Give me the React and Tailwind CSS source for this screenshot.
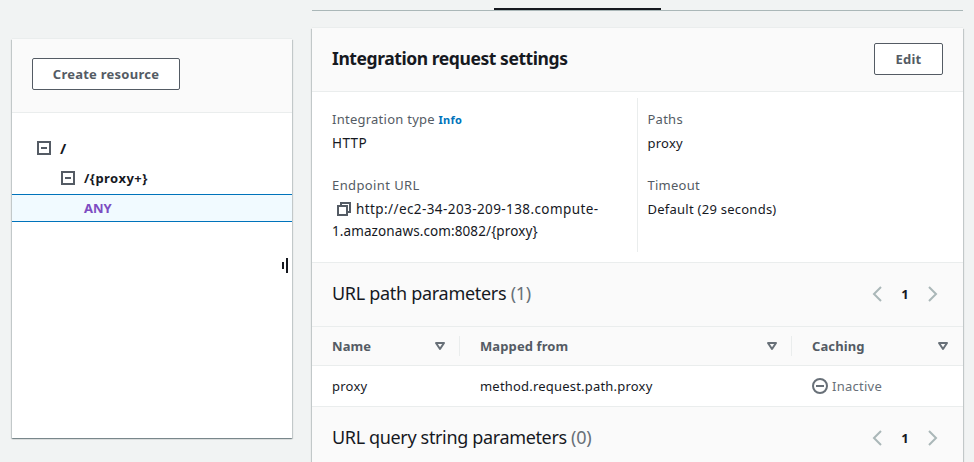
const panelShadow =
  "shadow-[0_-1px_0_0_#eaeded,0_1px_1px_0_rgba(0,28,36,0.3),1px_1px_1px_0_rgba(0,28,36,0.15),-1px_1px_1px_0_rgba(0,28,36,0.15)]";

function Chevron({ flip }) {
  return (
    <svg width="16" height="16" viewBox="0 0 16 16" fill="none" stroke="#aab7b8" strokeWidth="2" className={flip ? "-scale-x-100" : ""}>
      <path d="M12 1 5 8l7 7" />
    </svg>
  );
}

function Sort() {
  return (
    <svg width="16" height="16" viewBox="0 0 16 16" fill="none" stroke="#687078" strokeWidth="2" strokeLinejoin="round">
      <path d="M4 5h8l-4 6z" />
    </svg>
  );
}

function Collapse() {
  return (
    <svg width="14" height="14" viewBox="0 0 14 14" fill="none" stroke="#545b64" strokeWidth="2">
      <path d="M1 1h12v12H1zM4 7h6" />
    </svg>
  );
}

function SectionHeader({ title, count, spacing }) {
  return (
    <div className="flex h-16 shrink-0 items-center justify-between border-b border-[#eaeded] bg-[#fafafa] pr-[22px] pl-5">
      <h3 className={"-mt-1 text-[18px] leading-[22px] " + spacing}>
        {title} <span className="text-[#687078]">({count})</span>
      </h3>
      <div className="-mt-px flex items-center text-[13px] font-bold">
        <Chevron />
        <span className="w-10 text-center">1</span>
        <Chevron flip />
      </div>
    </div>
  );
}

function Field({ label, children }) {
  return (
    <div className="flex flex-col gap-0.5">
      <div className="text-[#545b64]">{label}</div>
      <div>{children}</div>
    </div>
  );
}

export default function App() {
  return (
    <div className="flex h-[462px] w-[974px] gap-5 overflow-hidden bg-[#f1f3f3] pl-3 font-['Noto_Sans',sans-serif] text-[13px] leading-[22px] tracking-[0.25px] text-[#16191f]">
      <aside className={"mt-[39px] flex h-[399px] w-[280px] flex-col bg-white " + panelShadow}>
        <div className="flex h-[74px] items-start border-b border-[#eaeded] bg-[#fafafa] px-5 pt-[19px]">
          <button className="h-8 w-[148px] rounded-[2px] border border-[#545b64] bg-white text-[13px] font-bold tracking-[0.25px] text-[#545b64]">
            Create resource
          </button>
        </div>
        <div className="flex flex-col pt-5 font-bold">
          <div className="flex h-[30px] items-center gap-[9px] pl-[25px]"><Collapse /><span className="text-[15px]">/</span></div>
          <div className="flex h-[30px] items-center gap-[9px] pl-[49px]"><Collapse /><span className="tracking-[0.45px]">/{"{proxy+}"}</span></div>
          <div className="mt-px flex h-7 items-center border-y border-[#0073bb] bg-[#f1faff] pl-[72px] tracking-normal text-[#7d4cc2]">ANY</div>
        </div>
        <div className="mt-9 flex items-center justify-end gap-0.5 pr-1">
          <span className="h-[7px] w-0.5 bg-[#16191f]" />
          <span className="h-[15px] w-0.5 bg-[#16191f]" />
        </div>
      </aside>

      <main className="flex w-[651px] flex-col">
        <div className="flex h-[11px] shrink-0 items-end border-b border-[#aab7b8]">
          <span className="ml-[182px] h-0.5 w-[167px] bg-[#16191f]" />
        </div>
        <section className={"mt-[17px] flex h-[460px] shrink-0 flex-col bg-white " + panelShadow}>
          <div className="flex h-16 shrink-0 items-center justify-between border-b border-[#eaeded] bg-[#fafafa] px-5">
            <h2 className="-mt-1 text-[17.5px] font-bold leading-[22px] tracking-[-0.43px]">Integration request settings</h2>
            <button className="-mt-px h-8 w-[69px] rounded-[2px] border border-[#545b64] bg-white text-[13px] font-bold tracking-[0.25px] text-[#545b64]">Edit</button>
          </div>
          <div className="flex h-[171px] shrink-0 border-b border-[#eaeded] pt-1.5">
            <div className="flex w-[325px] flex-col gap-5 pt-2.5 pl-5">
              <Field label={<>Integration type <b className="text-[11px] leading-none text-[#0073bb]">Info</b></>}>
                <span className="text-[13.5px] leading-none tracking-[0.4px]">HTTP</span>
              </Field>
              <Field label={<span className="tracking-[0.4px]">Endpoint URL</span>}>
                <svg width="16" height="16" viewBox="0 0 16 16" fill="none" stroke="#545b64" strokeWidth="2" className="mr-1 ml-1 inline-block align-[-3px]">
                  <path d="M2 5h9v9H2zM5 5V2h9v9h-3" />
                </svg>
                <span className="text-[13.5px] leading-none tracking-[0.41px]">http://ec2-34-203-209-138.compute-</span>
                <br />
                <span className="text-[13.5px] leading-none tracking-[0.1px]">1.amazonaws.com:8082/{"{proxy}"}</span>
              </Field>
            </div>
            <div className="flex h-[154px] flex-col gap-5 border-l border-[#eaeded] pt-2.5 pl-[9.5px]">
              <Field label="Paths">proxy</Field>
              <Field label="Timeout">Default (29 seconds)</Field>
            </div>
          </div>
          <SectionHeader title="URL path parameters" count={1} spacing="tracking-[-0.3px]" />
          <div className="flex h-[39px] shrink-0 items-center border-b border-[#eaeded] bg-[#fafafa] font-bold tracking-[0.1px] text-[#545b64]">
            <div className="flex h-5 w-[148px] items-center justify-between border-r border-[#eaeded] pr-[11px] pl-5">Name<Sort /></div>
            <div className="flex h-5 w-[332px] items-center justify-between border-r border-[#eaeded] pr-[11px] pl-5">Mapped from<Sort /></div>
            <div className="flex h-5 w-[171px] items-center justify-between pr-3 pl-5">Caching<Sort /></div>
          </div>
          <div className="flex h-[41px] shrink-0 items-center border-b border-[#eaeded]">
            <div className="w-[148px] pl-5">proxy</div>
            <div className="w-[332px] pl-5 tracking-[0.2px]">method.request.path.proxy</div>
            <div className="flex items-center gap-1 pl-5 text-[#687078]">
              <svg width="16" height="16" viewBox="0 0 16 16" fill="none" stroke="#687078" strokeWidth="2">
                <circle cx="8" cy="8" r="7" />
                <path d="M4 8h8" />
              </svg>
              Inactive
            </div>
          </div>
          <SectionHeader title="URL query string parameters" count={0} spacing="tracking-[-0.35px]" />
        </section>
      </main>
    </div>
  );
}
